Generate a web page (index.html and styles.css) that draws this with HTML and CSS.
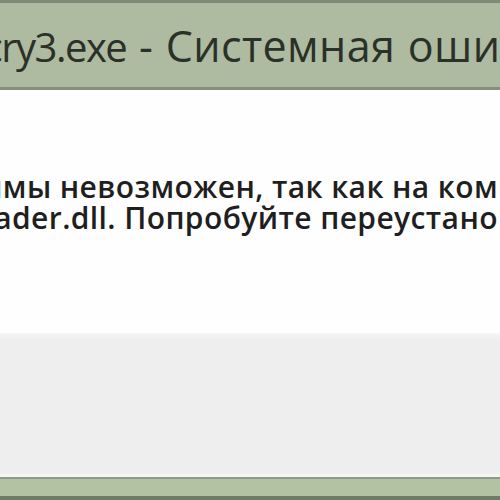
FILE: index.html
```html
<!DOCTYPE html>
<html lang="ru">
<head>
    <meta charset="UTF-8">
    <title>farcry3.exe - Системная ошибка</title>
    <link rel="stylesheet" href="styles.css">
</head>
<body>
    <div class="window">
        <div class="titlebar">
            <span class="title"><span class="app-name">farcry3.exe</span> - Системная ошибка</span>
        </div>
        <div class="content">
            <p class="line line-one">Запуск программы невозможен, так как на компьютере отсутствует</p>
            <p class="line line-two">uplay_r1_loader.dll. Попробуйте переустановить программу.</p>
        </div>
        <div class="buttons"></div>
        <div class="frame-bottom"></div>
    </div>
</body>
</html>
```

FILE: styles.css
```css
html, body {
    margin: 0;
    padding: 0;
    width: 500px;
    height: 500px;
    overflow: hidden;
    background-color: #b3c1a4;
}
.window {
    display: flex;
    flex-direction: column;
    height: 500px;
    font-family: 'Open Sans', 'Noto Sans', sans-serif;
}
.titlebar {
    height: 84px;
    border-top: 3px solid #7f8a74;
    border-bottom: 3px solid #858f7d;
    background-color: #aebba0;
    display: flex;
    align-items: center;
    white-space: nowrap;
    overflow: hidden;
}
.title {
    margin-left: -64px;
    font-size: 43px;
    color: #2b3129;
    letter-spacing: 0.4px;
    word-spacing: 1px;
}
.app-name {
    font-size: 40px;
    letter-spacing: -1.5px;
}
.content {
    height: 243px;
    background-color: #fefefe;
    padding-top: 81px;
    box-sizing: border-box;
    overflow: hidden;
}
.line {
    margin: 0;
    white-space: nowrap;
    font-size: 30px;
    font-weight: 600;
    line-height: 31px;
    letter-spacing: 0.4px;
    color: #1f1f1f;
}
.line-one {
    margin-left: -243px;
}
.line-two {
    margin-left: -172px;
}
.buttons {
    height: 141px;
    background: linear-gradient(#f7f7f7, #eeeeee 6px);
    border-bottom: 3px solid #f4f7f1;
}
.frame-bottom {
    flex: 1;
    border-top: 2px solid #8e9987;
    border-bottom: 4px solid #6f7b66;
    background-color: #b3c2a3;
}
```
